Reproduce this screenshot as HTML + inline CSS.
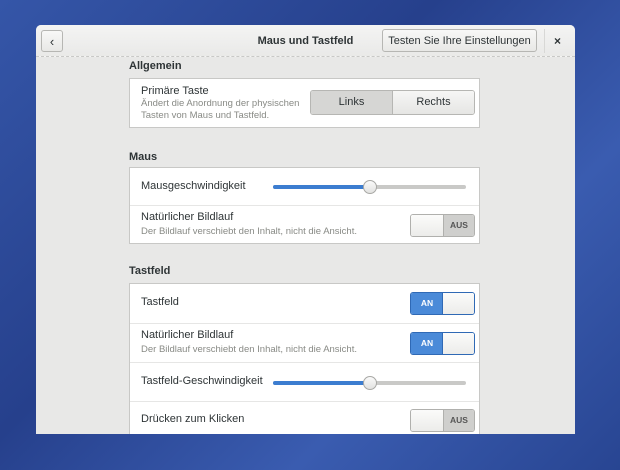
<!DOCTYPE html><html><head><style>
*{margin:0;padding:0;box-sizing:border-box}
body{width:620px;height:470px;overflow:hidden;background:linear-gradient(135deg,#3556a8,#26408c 40%,#3a5cb0 70%,#284592);font-family:"Liberation Sans","DejaVu Sans",sans-serif;font-size:11px;color:#2e3436;position:relative}
.win{position:absolute;left:36px;top:25px;width:539px;height:409px;background:#e8e8e7;border-radius:5px 5px 0 0;overflow:hidden}
.hdr{height:32px;background:linear-gradient(#f4f4f3,#e9e9e8);border-bottom:1px dashed #c8c8c6;position:relative}
.btn{position:absolute;border:1px solid #b6b6b3;border-radius:3px;background:linear-gradient(#f8f8f7,#e8e8e6);display:flex;align-items:center;justify-content:center}
.title{position:absolute;left:0;right:0;top:10px;text-align:center;font-weight:bold;font-size:11px}
.ab{position:absolute;font-size:11px}
.frame{position:absolute;left:93px;width:351px;background:#fff;border:1px solid #c8c8c6}
.lbl{position:absolute;left:93px;font-weight:bold}
.row{position:absolute;left:0;right:0;border-top:1px solid #e6e6e5}
.sub{color:#888a85;font-size:9.5px}
.sl{position:absolute;left:143px;width:193px;height:4px;border-radius:2px;background:#c9c9c7}
.sl i{position:absolute;left:0;top:0;height:4px;width:97px;background:#3c7dd0;border-radius:2px}
.sl b{position:absolute;left:90px;top:-5px;width:14px;height:14px;border-radius:50%;background:linear-gradient(#fafafa,#e2e2e0);border:1px solid #a8a8a5}
.tg{position:absolute;left:280px;width:65px;height:23px;border:1px solid #b0b0ad;border-radius:3px;overflow:hidden;font-size:8.5px;font-weight:bold}
.tg .w{position:absolute;top:0;bottom:0;width:32px;background:linear-gradient(#fbfbfa,#ececea)}
.off .w{left:0}.off .t{position:absolute;left:32px;right:0;top:0;bottom:0;background:#cfcfcd;color:#555;text-align:center;line-height:21px;border-left:1px solid #b0b0ad}
.on{border-color:#2f69b5}.on .w{right:0;border-left:1px solid #2f69b5}.on .t{position:absolute;left:0;width:32px;top:0;bottom:0;background:#4a8ad8;color:#fff;text-align:center;line-height:21px}
</style></head><body>
<div class="win">
<div class="hdr">
<div class="btn" style="left:5px;top:5px;width:22px;height:22px;font-size:13px">‹</div>
<div class="title">Maus und Tastfeld</div>
<div class="btn" style="left:346px;top:4px;width:155px;height:23px;font-size:11px">Testen Sie Ihre Einstellungen</div>
<div style="position:absolute;left:508px;top:4px;height:24px;border-left:1px solid #d8d8d6"></div>
<div class="ab" style="left:518px;top:9px;font-weight:bold;font-size:12px">×</div>
</div>
<div class="lbl" style="top:35px">Allgemein</div>
<div class="frame" style="top:53px;height:50px">
<div class="ab" style="left:11px;top:6px">Primäre Taste</div>
<div class="ab sub" style="left:11px;top:19px;line-height:12px">Ändert die Anordnung der physischen<br>Tasten von Maus und Tastfeld.</div>
<div style="position:absolute;left:180px;top:11px;width:165px;height:25px;border:1px solid #b6b6b3;border-radius:3px;overflow:hidden">
<div style="position:absolute;left:0;width:82px;height:100%;background:#d6d6d4;text-align:center;line-height:23px;border-right:1px solid #b6b6b3">Links</div>
<div style="position:absolute;left:82px;right:0;height:100%;background:linear-gradient(#f6f6f5,#e6e6e4);text-align:center;line-height:23px">Rechts</div></div>
</div>
<div class="lbl" style="top:126px">Maus</div>
<div class="frame" style="top:142px;height:77px">
<div class="ab" style="left:11px;top:12px">Mausgeschwindigkeit</div>
<div class="sl" style="top:17px"><i></i><b></b></div>
<div class="row" style="top:37px">
<div class="ab" style="left:11px;top:5px">Natürlicher Bildlauf</div>
<div class="ab sub" style="left:11px;top:20px">Der Bildlauf verschiebt den Inhalt, nicht die Ansicht.</div>
<div class="tg off" style="top:8px"><div class="w"></div><div class="t">AUS</div></div>
</div></div>
<div class="lbl" style="top:240px">Tastfeld</div>
<div class="frame" style="top:258px;height:160px">
<div class="ab" style="left:11px;top:12px">Tastfeld</div>
<div class="tg on" style="top:8px"><div class="t">AN</div><div class="w"></div></div>
<div class="row" style="top:39px">
<div class="ab" style="left:11px;top:5px">Natürlicher Bildlauf</div>
<div class="ab sub" style="left:11px;top:20px">Der Bildlauf verschiebt den Inhalt, nicht die Ansicht.</div>
<div class="tg on" style="top:8px"><div class="t">AN</div><div class="w"></div></div></div>
<div class="row" style="top:78px">
<div class="ab" style="left:11px;top:12px">Tastfeld-Geschwindigkeit</div>
<div class="sl" style="top:18px"><i></i><b></b></div></div>
<div class="row" style="top:117px">
<div class="ab" style="left:11px;top:11px">Drücken zum Klicken</div>
<div class="tg off" style="top:7px"><div class="w"></div><div class="t">AUS</div></div></div>
</div>
</div>
</body></html>
